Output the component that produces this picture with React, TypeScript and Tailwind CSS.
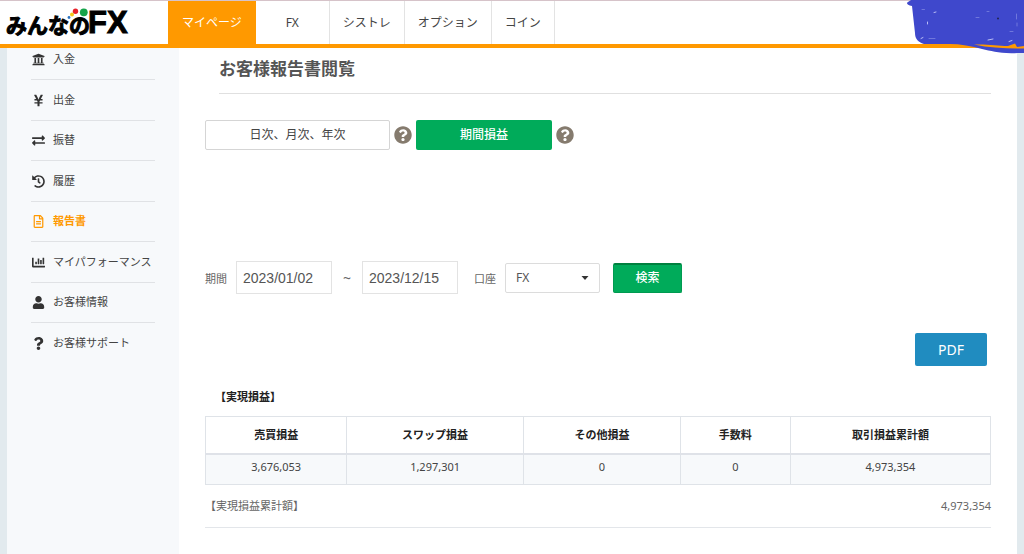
import type { ReactNode } from "react";
import {
  FaChartBar,
  FaExchangeAlt,
  FaHistory,
  FaQuestion,
  FaQuestionCircle,
  FaRegFileAlt,
  FaUniversity,
  FaUser,
  FaYenSign,
} from "react-icons/fa";

const TABS = ["マイページ", "FX", "シストレ", "オプション", "コイン"];

const MENU: { label: string; icon: ReactNode; active?: boolean }[] = [
  { label: "入金", icon: <FaUniversity /> },
  { label: "出金", icon: <FaYenSign /> },
  { label: "振替", icon: <FaExchangeAlt /> },
  { label: "履歴", icon: <FaHistory /> },
  { label: "報告書", icon: <FaRegFileAlt />, active: true },
  { label: "マイパフォーマンス", icon: <FaChartBar /> },
  { label: "お客様情報", icon: <FaUser /> },
  { label: "お客様サポート", icon: <FaQuestion /> },
];

const RESULTS = [
  { label: "売買損益", value: "3,676,053", width: "w-9/50" },
  { label: "スワップ損益", value: "1,297,301", width: "w-9/40" },
  { label: "その他損益", value: "0", width: "w-1/5" },
  { label: "手数料", value: "0", width: "w-7/50" },
  { label: "取引損益累計額", value: "4,973,354", width: "w-51/200" },
];

function Logo() {
  return (
    <a href="#" aria-label="みんなのFX" className="relative flex w-[168px] shrink-0 items-baseline pt-[6px] pl-[6px] text-black">
      <span className="font-['Noto_Sans_CJK_JP',sans-serif] text-[21px] leading-8 font-bold [-webkit-text-stroke:1px_black]">みんなの</span>
      <span className="-ml-[2px] font-['Liberation_Sans',sans-serif] text-[31px] leading-8 font-bold [-webkit-text-stroke:1px_black]">FX</span>
      <svg viewBox="0 0 24 14" className="absolute top-[6px] left-[66px] h-[14px] w-6" aria-hidden="true">
        <circle cx="3" cy="10.5" r="1.4" fill="#2a72c0" />
        <circle cx="6" cy="7.5" r="2" fill="#f5c518" />
        <circle cx="9.500" cy="4.200" r="2.7" fill="#e8202a" />
        <circle cx="17.800" cy="5.3" r="3.9" fill="#16a34a" />
      </svg>
    </a>
  );
}

/* Hand-drawn block covering the account details */
function AccountMask() {
  return (
    <svg viewBox="0 0 118 54" className="absolute -top-px right-0 h-[54px] w-[118px]" aria-hidden="true">
      <path
        d="M5 0H118V53H112C94 54 86 51 76 49C66 46 54 44 44 44L18 44C12 42 9 39 9 33L6 6C1 5 0 3 2 2Z"
        fill="#3f48cc"
      />
      <path d="M68 44.500C82 44 92 46 102 46L109 43.500L111 47L118 46V48.500C100 48.500 84 48 68 44.500Z" fill="#ff9900" />
      <g fill="none" stroke="#b9bdf5" strokeWidth="1" strokeLinecap="round">
        <path d="M21.500 22V24M15 38.500L17 37.500M28 12.500L30 12M82 40L87 39M103 41.500L106 40.500" />
        <path d="M16 9.500H18.500M23 38.500H29M70 17.500H73M81 11.500H83M104 31.500H107M110.500 14V19M111 23V26" strokeOpacity="0.4" />
      </g>
      <circle cx="92" cy="18.500" r="1" fill="#23264f" />
    </svg>
  );
}

function Help({ label }: { label: string }) {
  return (
    <button type="button" aria-label={label} className="shrink-0 text-[#857b6e]">
      <FaQuestionCircle className="size-[18px]" />
    </button>
  );
}

function DateField({ id, label, value }: { id: string; label: string; value: string }) {
  return (
    <input
      id={id}
      type="text"
      aria-label={label}
      defaultValue={value}
      className="h-[33px] w-24 border border-[#e3e3e3] bg-white px-[6px] font-['Liberation_Sans',sans-serif] text-[14px] text-[#555]"
    />
  );
}

export default function App() {
  return (
    <div className="flex min-h-screen flex-col bg-[#e2eaee] font-['Noto_Sans','Noto_Sans_CJK_JP',sans-serif] text-[#444]">
      <header className="sticky top-0 z-10 flex h-12 border-t border-b-4 border-t-[#d6c3c9] border-b-[#ff9900] bg-white">
        <Logo />
        <nav className="flex text-[12px]">
          {TABS.map((tab, i) => (
            <a
              key={tab}
              href="#"
              className={
                i === 0
                  ? "flex items-center justify-center bg-[#ff9900] px-[14px] text-white"
                  : "flex min-w-[63px] items-center justify-center border-r border-[#e3e3e3] px-[13px] nth-2:min-w-[74px]"
              }
            >
              {tab}
            </a>
          ))}
        </nav>
        <AccountMask />
      </header>

      <div className="mx-[7px] flex flex-1">
        {/* side menu, its top slides under the sticky header */}
        <aside className="w-[172px] shrink-0 bg-[#f7f9fb] pr-6 pl-[23px]">
          <ul className="-mt-2 text-[11px]">
            {MENU.map((item) => (
              <li key={item.label} className="ml-px border-b border-[#e0e2e5] last:border-b-0 odd:h-10 even:h-[41px]">
                <a
                  href="#"
                  className={
                    item.active
                      ? "flex h-full items-center gap-2 font-bold whitespace-nowrap text-[#ff9900]"
                      : "flex h-full items-center gap-2 whitespace-nowrap"
                  }
                >
                  <span className={item.active ? "flex w-[14px] justify-center text-[13px]" : "flex w-[14px] justify-center text-[13px] text-[#333]"}>
                    {item.icon}
                  </span>
                  {item.label}
                </a>
              </li>
            ))}
          </ul>
        </aside>

        <main className="min-w-0 flex-1 bg-white px-[26px] pb-[26px]">
          <h1 className="ml-[14px] border-b border-[#e0e0e0] pt-2 pb-3 text-[17px] leading-[25px] font-bold text-[#555]">
            お客様報告書閲覧
          </h1>

          <div className="mt-[26px] flex items-center gap-1">
            <button type="button" className="h-[30px] w-[185px] rounded-[2px] border border-[#d5d5d5] text-[12px]">
              日次、月次、年次
            </button>
            <Help label="日次、月次、年次について" />
            <button type="button" className="h-[30px] w-[136px] rounded-[2px] bg-[#00ab5a] text-[12px] font-medium text-white">
              期間損益
            </button>
            <Help label="期間損益について" />
          </div>

          <form className="mt-[111px] flex items-center text-[11px] text-[#666]">
            <label htmlFor="from" className="mr-[9px] pt-1">期間</label>
            <DateField id="from" label="開始日" value="2023/01/02" />
            <span className="w-[30px] text-center text-[14px]">~</span>
            <DateField id="to" label="終了日" value="2023/12/15" />
            <label htmlFor="account" className="mr-[9px] ml-4 pt-1">口座</label>
            <div className="relative">
              <select
                id="account"
                className="h-[30px] w-[95px] appearance-none rounded-[2px] border border-[#dcdcdc] bg-white px-[10px] text-[12px] text-[#555]"
              >
                <option>FX</option>
              </select>
              <svg viewBox="0 0 8 4" className="pointer-events-none absolute top-[13px] right-[11px] h-1 w-2" aria-hidden="true">
                <path d="M0.500 0H7.500L4 4Z" fill="#333" />
              </svg>
            </div>
            <button
              type="button"
              className="ml-[13px] h-[30px] w-[69px] rounded-[2px] border border-t-2 border-[#009a51] border-t-[#00803f] bg-[#00ab5a] text-[12px] font-medium text-white"
            >
              検索
            </button>
          </form>

          <div className="mt-[39px] mr-1 flex justify-end">
            <button type="button" className="h-[33px] w-[72px] rounded-[2px] bg-[#208cc0] text-[14px] text-white">
              PDF
            </button>
          </div>

          <h2 className="mt-[23px] ml-[10px] text-[11px] leading-4 font-bold text-[#222]">【実現損益】</h2>
          <table className="mt-[11px] w-full table-fixed border-collapse text-center text-[11px]">
            <thead>
              <tr className="h-[37px] border-b-2 border-[#dfe2e8] text-[#222]">
                {RESULTS.map((col) => (
                  <th key={col.label} scope="col" className={`${col.width} border-x border-t border-[#dfe3e8]`}>
                    {col.label}
                  </th>
                ))}
              </tr>
            </thead>
            <tbody>
              <tr className="h-[31px] bg-[#f7f9fb]">
                {RESULTS.map((col) => (
                  <td key={col.label} className="border border-[#dfe3e8] pb-1">
                    {col.value}
                  </td>
                ))}
              </tr>
            </tbody>
          </table>

          <div className="flex h-[43px] items-center justify-between border-b border-[#e3e6ea] text-[11px] text-[#666]">
            <span>【実現損益累計額】</span>
            <span>4,973,354</span>
          </div>
        </main>
      </div>
    </div>
  );
}
